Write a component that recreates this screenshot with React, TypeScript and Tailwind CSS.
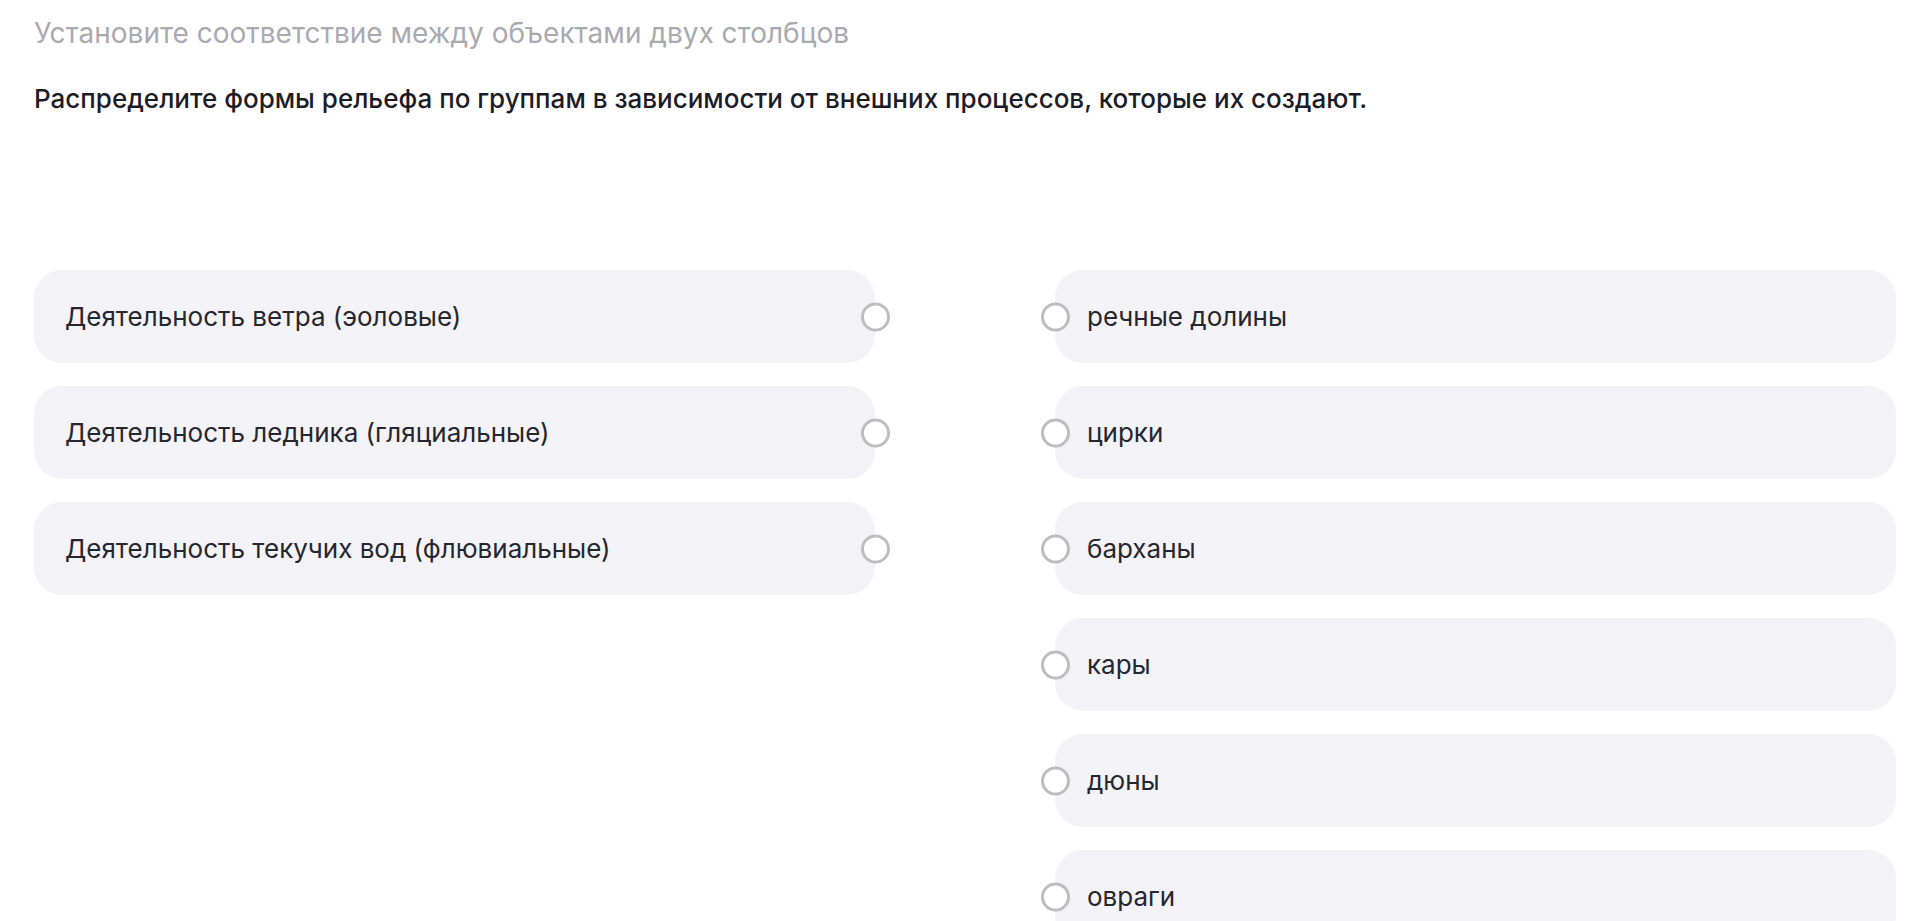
const leftItems = [
  'Деятельность ветра (эоловые)',
  'Деятельность ледника (гляциальные)',
  'Деятельность текучих вод (флювиальные)',
];

const rightItems = ['речные долины', 'цирки', 'барханы', 'кары', 'дюны', 'овраги'];

function Dot() {
  return <span className="block w-[29px] h-[29px] rounded-full border-[3px] border-[#bdbdc0] bg-white shrink-0" />;
}

export default function App() {
  return (
    <div
      className="min-h-screen bg-white pl-[34px] pr-[24px] pt-[13px] overflow-hidden"
      style={{ fontFamily: 'Inter, "Noto Sans", sans-serif' }}
    >
      <p className="text-[28px] leading-[40px] text-[#a9a9b1]">Установите соответствие между объектами двух столбцов</p>
      <h1 className="mt-[27px] text-[26px] leading-[38px] font-medium text-[#1c1c28]">
        Распределите формы рельефа по группам в зависимости от внешних процессов, которые их создают.
      </h1>

      <div className="mt-[152px] grid grid-cols-2 gap-x-[180px] items-start">
        <div className="flex flex-col gap-[23px]">
          {leftItems.map((t) => (
            <div key={t} className="relative h-[93px] rounded-[28px] bg-[#f2f2f7] flex items-center pl-[31px]">
              <span className="text-[26px] text-[#26262f]">{t}</span>
              <div className="absolute right-[-14.5px] top-1/2 -translate-y-1/2">
                <Dot />
              </div>
            </div>
          ))}
        </div>
        <div className="flex flex-col gap-[23px]">
          {rightItems.map((t) => (
            <div key={t} className="relative h-[93px] rounded-[28px] bg-[#f2f2f7] flex items-center pl-[32px]">
              <div className="absolute left-[-14.5px] top-1/2 -translate-y-1/2">
                <Dot />
              </div>
              <span className="text-[26px] text-[#26262f]">{t}</span>
            </div>
          ))}
        </div>
      </div>
    </div>
  );
}
